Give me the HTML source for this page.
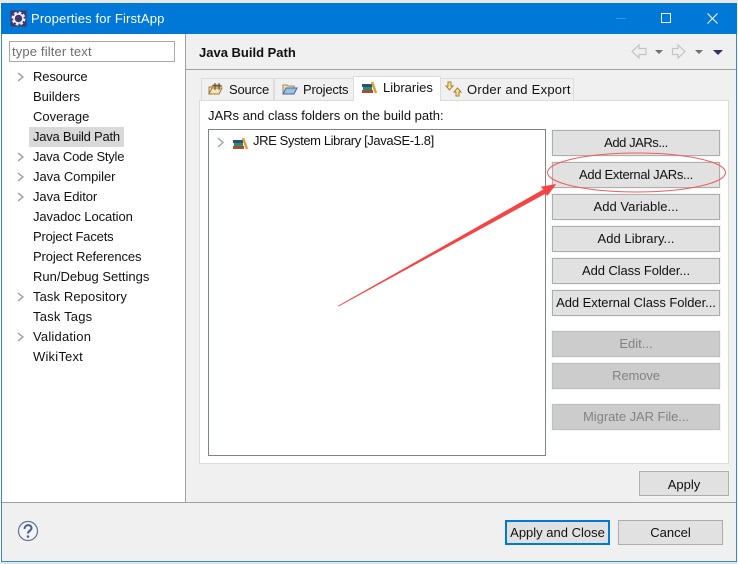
<!DOCTYPE html>
<html><head><meta charset="utf-8"><style>
*{box-sizing:border-box}
html,body{margin:0;padding:0}
body{width:738px;height:564px;position:relative;overflow:hidden;background:#fff;font:13px/18px "Liberation Sans",sans-serif;color:#111}
.a{position:absolute}
.t{position:absolute;white-space:nowrap;line-height:18px}
.b{position:absolute;left:552px;width:168px;height:26px;background:#e1e1e1;border:1px solid #adadad;text-align:center;line-height:24px;white-space:nowrap;box-shadow:0 0 0 1px #f4f4f4}
.d{background:#cccccc;border-color:#bfbfbf;color:#838383}
.tab{position:absolute;background:#f0f0f0;border:1px solid #dcdcdc;border-bottom:0}
svg{position:absolute;overflow:visible}
</style></head><body>
<div class="a" style="left:0;top:0;width:738px;height:3px;background:#e8e8e8"></div>
<div class="a" style="left:0;top:562px;width:738px;height:2px;background:#e4e4e4"></div>
<div class="a" style="left:1px;top:3px;width:736px;height:559px;background:#f0f0f0;border:1px solid #3d87c7"></div>
<div class="a" style="left:1px;top:3px;width:736px;height:31px;background:#0078d7"></div>
<svg style="left:10px;top:10px" width="17" height="17" viewBox="0 0 17 17"><rect width="16" height="16" x=".5" y=".5" fill="#3f3a6e"/><circle cx="8.500" cy="8.500" r="5.500" fill="none" stroke="#e8e8ee" stroke-width="3" stroke-dasharray="2.600 1.700"/><circle cx="8.500" cy="8.500" r="4.500" fill="none" stroke="#f0f0f4" stroke-width="1.600"/></svg>
<div class="t" style="left:31px;top:10px;color:#fff;letter-spacing:.15px">Properties for FirstApp</div>
<div class="a" style="left:616px;top:18px;width:10px;height:1px;background:#3f97df"></div>
<div class="a" style="left:661px;top:13px;width:10px;height:10px;border:1px solid #fff"></div>
<svg style="left:707px;top:13px" width="11" height="11"><path d="M.5.500 10.500 10.500M10.500.500.500 10.500" stroke="#fff" fill="none"/></svg>

<div class="a" style="left:2px;top:34px;width:184px;height:469px;background:#fff;border-right:1px solid #a0a0a0"></div>
<div class="a" style="left:2px;top:502px;width:734px;height:1px;background:#a0a0a0"></div>
<div class="a" style="left:186px;top:69px;width:550px;height:1px;background:#a0a0a0"></div>
<div class="a" style="left:9px;top:41px;width:166px;height:21px;background:#fff;border:1px solid #a9a9a9"></div>
<div class="t" style="left:12px;top:43px;color:#6d6d6d;letter-spacing:.15px">type filter text</div>
<div class="a" style="left:29px;top:127px;width:95px;height:20px;background:#d9d9d9"></div>

<div class="t" style="left:33px;top:68px;letter-spacing:-.15px">Resource</div>
<div class="t" style="left:33px;top:88px">Builders</div>
<div class="t" style="left:33px;top:108px">Coverage</div>
<div class="t" style="left:33px;top:128px;letter-spacing:-.23px">Java Build Path</div>
<div class="t" style="left:33px;top:148px;letter-spacing:-.23px">Java Code Style</div>
<div class="t" style="left:33px;top:168px;letter-spacing:-.05px">Java Compiler</div>
<div class="t" style="left:33px;top:188px;letter-spacing:-.08px">Java Editor</div>
<div class="t" style="left:33px;top:208px;letter-spacing:-.09px">Javadoc Location</div>
<div class="t" style="left:33px;top:228px;letter-spacing:-.19px">Project Facets</div>
<div class="t" style="left:33px;top:248px;letter-spacing:-.12px">Project References</div>
<div class="t" style="left:33px;top:268px">Run/Debug Settings</div>
<div class="t" style="left:33px;top:288px;letter-spacing:.1px">Task Repository</div>
<div class="t" style="left:33px;top:308px;letter-spacing:.2px">Task Tags</div>
<div class="t" style="left:33px;top:328px;letter-spacing:.2px">Validation</div>
<div class="t" style="left:33px;top:348px;letter-spacing:.2px">WikiText</div>
<svg style="left:0;top:0" width="40" height="360"><g fill="none" stroke="#a6a6a6" stroke-width="1.500"><path d="M18 73l5 4-5 4M18 153l5 4-5 4M18 173l5 4-5 4M18 193l5 4-5 4M18 293l5 4-5 4M18 333l5 4-5 4"/></g></svg>

<div class="t" style="left:199px;top:44px;font-weight:bold">Java Build Path</div>
<svg style="left:620px;top:36px" width="110" height="30"><g fill="#f0f0f0" stroke="#c4c4c4" stroke-width="1.200"><path d="M12 15.500l7-6.500v3.500h7v6h-7v3.500z"/><path d="M65 15.500l-7-6.500v3.500h-5.500v6h5.500v3.500z"/></g><path d="M35 14h8l-4 4zM75 14h8l-4 4z" fill="#6f6f6f"/><path d="M93 14h10l-5 5z" fill="#3c2a6e"/></svg>

<div class="a" style="left:199px;top:100px;width:530px;height:364px;background:#fff;border:1px solid #dcdcdc"></div>
<div class="tab" style="left:201px;top:78px;width:73px;height:22px"></div>
<div class="tab" style="left:274px;top:78px;width:80px;height:22px"></div>
<div class="tab" style="left:440px;top:78px;width:134px;height:22px"></div>
<div class="tab" style="left:353px;top:76px;width:88px;height:25px;background:#fff"></div>
<svg style="left:208px;top:82px" width="16" height="14"><path d="M1 12V5h3l1-2h7v2" fill="#f5deb0" stroke="#9b7a3d"/><path d="M1 12l3-6h10l-3 6z" fill="#f7e4b8" stroke="#9b7a3d"/><path d="M7 1v7M11 1v7M5 4h9" stroke="#5d4a22" fill="none"/></svg>
<svg style="left:282px;top:82px" width="16" height="14"><path d="M1 12V3h4l1 1h6v2" fill="#f3e2b8" stroke="#9b8a5a"/><path d="M1 12l3-6h11l-3 6z" fill="#9dc0e6" stroke="#44689a"/></svg>
<div class="t" style="left:229px;top:81px;letter-spacing:-.2px">Source</div>
<div class="t" style="left:303px;top:81px;letter-spacing:-.2px">Projects</div>
<div class="t" style="left:383px;top:79px">Libraries</div>
<div class="t" style="left:467px;top:81px;letter-spacing:.25px">Order and Export</div>
<svg style="left:361px;top:81px" width="16" height="14"><rect x="1" y="9" width="11" height="3" fill="#a0522d"/><rect x="2" y="6" width="9" height="3" fill="#2e8b72"/><rect x="1" y="3" width="10" height="3" fill="#2c4f7c"/><path d="M11 1l4 11" stroke="#e0a030" stroke-width="2.500"/></svg>
<svg style="left:445px;top:81px" width="18" height="17"><path d="M3 1h3v4h2L4.500 9 1 5h2z" fill="#fbe6a8" stroke="#a57f2a"/><path d="M11 15v-4H9l3.500-4L16 11h-2v4z" fill="#fbe6a8" stroke="#a57f2a"/></svg>

<div class="t" style="left:208px;top:107px">JARs and class folders on the build path:</div>
<div class="a" style="left:208px;top:129px;width:338px;height:327px;background:#fff;border:1px solid #82828c"></div>
<svg style="left:217px;top:137px" width="34" height="14"><path d="M1 1l5 4.500-5 4.500" fill="none" stroke="#a6a6a6" stroke-width="1.500"/><rect x="16" y="9" width="11" height="3" fill="#a0522d"/><rect x="17" y="6" width="9" height="3" fill="#2e8b72"/><rect x="16" y="3" width="10" height="3" fill="#2c4f7c"/><path d="M26 1l4 11" stroke="#e0a030" stroke-width="2.500"/></svg>
<div class="t" style="left:253px;top:132px;letter-spacing:-.39px">JRE System Library [JavaSE-1.8]</div>

<div class="b" style="top:130px;letter-spacing:-.45px">Add JARs...</div>
<div class="b" style="top:162px;letter-spacing:-.3px">Add External JARs...</div>
<div class="b" style="top:194px;letter-spacing:.05px">Add Variable...</div>
<div class="b" style="top:226px;letter-spacing:.05px">Add Library...</div>
<div class="b" style="top:258px;letter-spacing:-.1px">Add Class Folder...</div>
<div class="b" style="top:290px;letter-spacing:-.05px">Add External Class Folder...</div>
<div class="b d" style="top:331px">Edit...</div>
<div class="b d" style="top:363px;letter-spacing:-.1px">Remove</div>
<div class="b d" style="top:404px;letter-spacing:-.05px">Migrate JAR File...</div>

<div class="b" style="left:639px;top:471px;width:90px;height:25px;line-height:25px">Apply</div>
<div class="b" style="left:505px;top:520px;width:105px;height:25px;border:2px solid #0078d7;line-height:22px;box-shadow:none">Apply and Close</div>
<div class="b" style="left:618px;top:520px;width:105px;height:25px;line-height:23px;box-shadow:none">Cancel</div>

<svg style="left:18px;top:521px" width="20" height="20"><circle cx="10" cy="10" r="9.500" fill="#f4f4f6" stroke="#5f7393" stroke-width="1.200"/><path d="M6.500 8c0-5 7-5 7-1 0 3-3.500 2.500-3.500 5.500" fill="none" stroke="#4a5f86" stroke-width="2"/><circle cx="10" cy="15.500" r="1.300" fill="#4a5f86"/></svg>

<svg style="left:0;top:0" width="738" height="564"><ellipse cx="636.500" cy="172.500" rx="89" ry="19.500" fill="none" stroke="#f25a5a" stroke-width="1"/><path d="M338.500 306 545 193.500 547.500 195 555.500 184.500 541.500 187 544 189.500z" fill="#f64444" stroke="#f64444" stroke-width=".8" stroke-linejoin="round"/></svg>
</body></html>
